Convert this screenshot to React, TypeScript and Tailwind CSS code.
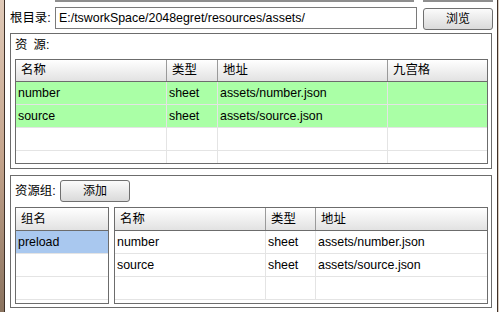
import React from "react";

type Col = { title: string; w: string };

interface GridProps {
  cols: Col[];
  rows: string[][];
  total: number;
  height: string;
  headH: string;
  rowBg?: string;
}

function Grid(props: GridProps) {
  const list: string[][] = [...props.rows];
  while (list.length < props.total) list.push(props.cols.map(() => ""));
  return (
    <div className={`flex flex-col overflow-hidden border border-[#6c6c6c] bg-white ${props.height}`}>
      <div className={`flex shrink-0 border-b border-[#6c6c6c] bg-gradient-to-b from-white to-[#e2e2e2] ${props.headH}`}>
        {props.cols.map((c, i) => (
          <div
            key={i}
            className={`flex items-center pl-[5px] ${c.w} ${i < props.cols.length - 1 ? "border-r border-[#9a9a9a]" : ""}`}
          >
            {c.title}
          </div>
        ))}
      </div>
      <div className="flex-1 overflow-hidden">
        {list.map((r, j) => (
          <div
            key={j}
            className={`flex h-[23px] border-b border-[#e4e4e4] ${j < props.rows.length && props.rowBg ? props.rowBg : ""}`}
          >
            {props.cols.map((c, i) => (
              <div
                key={i}
                className={`flex items-center pl-[2px] ${c.w} ${i < props.cols.length - 1 ? "border-r border-[#e4e4e4]" : ""}`}
              >
                {r[i]}
              </div>
            ))}
          </div>
        ))}
      </div>
    </div>
  );
}

function Btn({ label, w }: { label: string; w: string }) {
  return (
    <button
      className={`h-[22px] ${w} rounded-[3px] border border-[#707070] bg-gradient-to-b from-[#fbfbfb] to-[#dadada] text-[12px] leading-none text-black`}
    >
      {label}
    </button>
  );
}

export default function App() {
  const resCols: Col[] = [
    { title: "名称", w: "w-[151px]" },
    { title: "类型", w: "w-[51px]" },
    { title: "地址", w: "w-[170px]" },
    { title: "九宫格", w: "flex-1" },
  ];
  const items = [
    ["number", "sheet", "assets/number.json", ""],
    ["source", "sheet", "assets/source.json", ""],
  ];
  const itemCols: Col[] = [
    { title: "名称", w: "w-[151px]" },
    { title: "类型", w: "w-[50px]" },
    { title: "地址", w: "flex-1" },
  ];

  return (
    <div className="flex h-[312px] w-[499px] overflow-hidden bg-white font-['Liberation_Sans','Noto_Sans_CJK_SC',sans-serif] text-[12.4px] text-black">
      <div className="w-[5px] shrink-0 border-r border-[#3e3028] bg-gradient-to-b from-[#e0cab8] via-[#c4a48c] to-[#8a735f]" />

      <div className="flex w-[492px] flex-col">
        {/* tail of the previous row, cut off at the top */}
        <div className="flex h-[2px]">
          <div className="ml-[50px] w-[359px] bg-[#8e8e8e]" />
          <div className="ml-[9px] w-[70px] bg-[#8e8e8e]" />
        </div>

        <div className="mt-[5px] flex h-[23px] items-start pl-[5px]">
          <span className="w-[45px] leading-[22px]">根目录:</span>
          <div className="flex h-[22px] w-[362px] items-center border border-[#7a7a7a] bg-white pl-[3px]">
            E:/tsworkSpace/2048egret/resources/assets/
          </div>
          <div className="ml-[6px] mt-[1px]">
            <Btn label="浏览" w="w-[70px]" />
          </div>
        </div>

        <div className="ml-[5px] mt-[3px] flex h-[136px] w-[482px] flex-col border border-[#6c6c6c] pl-[4px] pr-[3px] pt-[3px]">
          <div className="h-[16px] leading-[16px]">资&ensp;源:</div>
          <div className="mt-[6px]">
            <Grid cols={resCols} rows={items} total={4} height="h-[105px]" headH="h-[22px]" rowBg="bg-[#aaffa6]" />
          </div>
        </div>

        <div className="ml-[5px] mt-[6px] flex h-[133px] w-[482px] flex-col border border-[#6c6c6c] pl-[4px] pr-[3px] pt-[4px]">
          <div className="flex h-[22px] items-center">
            <span className="w-[45px]">资源组:</span>
            <Btn label="添加" w="w-[70px]" />
          </div>
          <div className="mt-[5px] flex gap-[5px]">
            <div className="w-[94px]">
              <Grid cols={[{ title: "组名", w: "flex-1" }]} rows={[["preload"]]} total={3} height="h-[97px]" headH="h-[23px]" rowBg="bg-[#a9c8ef]" />
            </div>
            <div className="w-[374px]">
              <Grid cols={itemCols} rows={items} total={3} height="h-[97px]" headH="h-[23px]" />
            </div>
          </div>
        </div>
      </div>

      <div className="w-[2px] shrink-0 border-l border-[#3e3028] bg-[#d8ccc0]" />
    </div>
  );
}
